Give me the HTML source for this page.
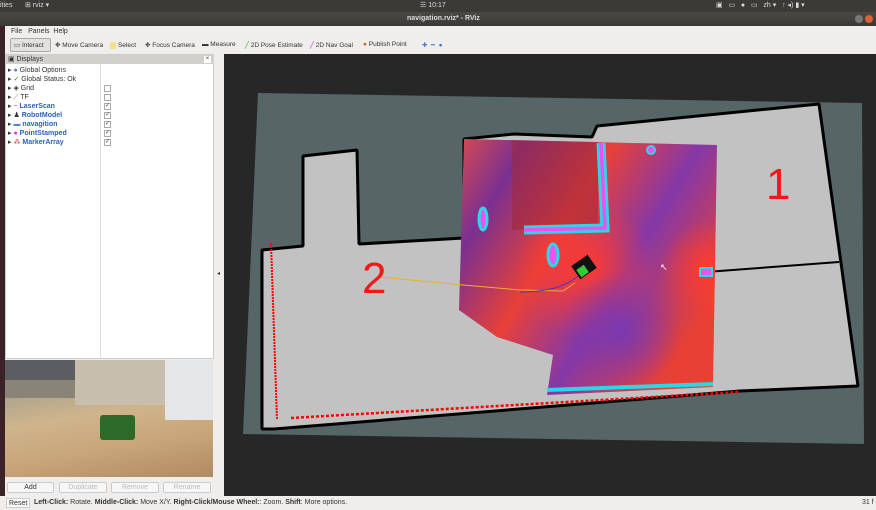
<!DOCTYPE html>
<html><head><meta charset="utf-8"><style>
*{margin:0;padding:0;box-sizing:border-box}
body{width:876px;height:510px;overflow:hidden;background:#efeeec;font-family:"Liberation Sans",sans-serif;font-size:7px;color:#333;position:relative}
.abs{position:absolute}
.row{position:absolute;left:8px;height:9px;line-height:9px;white-space:nowrap}
.row b{color:#2a62b8}
.cb{position:absolute;left:104px;width:7px;height:7px;border:1px solid #aaa;background:#fff;font-size:6px;line-height:5px;text-align:center;color:#345}
.btn{position:absolute;top:482px;height:11px;border:1px solid #ccc;border-radius:2px;background:#f7f7f7;text-align:center;line-height:10px;font-size:7px}
.tb{position:absolute;top:41px;white-space:nowrap;font-size:6.5px}
</style></head><body>
<div class="abs" style="left:0;top:0;width:876px;height:12px;background:#3b3a36;color:#ddd;font-size:7px;line-height:12px">
<span class="abs" style="left:0">ities</span><span class="abs" style="left:25px">⊞ rviz ▾</span>
<span class="abs" style="left:420px">☰ 10:17</span>
<span class="abs" style="left:716px">▣ &nbsp; ▭ &nbsp; ● &nbsp; ▭ &nbsp; zh ▾ &nbsp; ↑ ◂) ▮ ▾</span></div>
<div class="abs" style="left:0;top:12px;width:876px;height:14px;background:linear-gradient(#4a4944,#3a3935);color:#ddd;line-height:14px;font-weight:bold;font-size:7px"><span class="abs" style="left:407px">navigation.rviz* - RViz</span>
<span class="abs" style="left:855px;top:3px;width:8px;height:8px;border-radius:4px;background:#777"></span><span class="abs" style="left:865px;top:3px;width:8px;height:8px;border-radius:4px;background:#e06030"></span></div>
<div class="abs" style="left:5px;top:26px;width:871px;height:11px;line-height:11px"><span style="margin-left:6px">File &nbsp; Panels &nbsp;Help</span></div>
<div class="abs" style="left:0;top:26px;width:5px;height:484px;background:#3a2228"></div>
<div class="abs" style="left:10px;top:38px;width:41px;height:14px;border:1px solid #aaa;border-radius:2px;background:#e2e1df"></div>
<span class="tb" style="left:14px">▭ Interact</span>
<span class="tb" style="left:55px">✥ Move Camera</span>
<span class="tb" style="left:110px"><span style="background:#f2e38a;color:#f2e38a">▭</span> Select</span>
<span class="tb" style="left:145px">✥ Focus Camera</span>
<span class="tb" style="left:202px">▬ Measure</span>
<span class="tb" style="left:245px"><span style="color:#2a2">╱</span> 2D Pose Estimate</span>
<span class="tb" style="left:310px"><span style="color:#c2c">╱</span> 2D Nav Goal</span>
<span class="tb" style="left:363px"><span style="color:#c60">●</span> Publish Point</span>
<span class="tb" style="left:422px;color:#47c">✚ &nbsp;━ &nbsp;●</span>
<div class="abs" style="left:5px;top:54px;width:209px;height:305px;background:#fff;border:1px solid #ccc"></div>
<div class="abs" style="left:5px;top:55px;width:209px;height:9px;background:#d2d0cc;line-height:9px;padding-left:3px">▣ Displays<span class="abs" style="right:3px;top:1px;width:7px;height:7px;background:#fff;font-size:6px;line-height:7px;text-align:center">×</span></div>
<div class="abs" style="left:100px;top:64px;width:1px;height:295px;background:#ddd"></div>
<div class="row" style="top:66px">▸ <span style="color:#48c">●</span> Global Options</div>
<div class="row" style="top:75px">▸ <span style="color:#292">✓</span> Global Status: Ok</div>
<div class="row" style="top:84px">▸ ◈ Grid</div><div class="cb" style="top:85px"></div>
<div class="row" style="top:93px">▸ <span style="color:#c60">⟋</span> TF</div><div class="cb" style="top:94px"></div>
<div class="row" style="top:102px">▸ <span style="color:#d33">~</span> <b>LaserScan</b></div><div class="cb" style="top:103px">✓</div>
<div class="row" style="top:111px">▸ ♟ <b>RobotModel</b></div><div class="cb" style="top:112px">✓</div>
<div class="row" style="top:120px">▸ <span style="color:#58c">▬</span> <b>navagition</b></div><div class="cb" style="top:121px">✓</div>
<div class="row" style="top:129px">▸ <span style="color:#d3d">●</span> <b>PointStamped</b></div><div class="cb" style="top:130px">✓</div>
<div class="row" style="top:138px">▸ <span style="color:#c33">⁂</span> <b>MarkerArray</b></div><div class="cb" style="top:139px">✓</div>
<div class="abs" style="left:5px;top:360px;width:208px;height:117px;background:linear-gradient(170deg,#9a958c 0%,#b7a98d 30%,#cfb48c 45%,#c9a57a 70%,#b08a60 100%);overflow:hidden">
<div class="abs" style="left:0;top:0;width:70px;height:20px;background:#5c5d60"></div>
<div class="abs" style="left:0;top:20px;width:70px;height:18px;background:#8a8478"></div>
<div class="abs" style="left:70px;top:0;width:90px;height:45px;background:#c8beae"></div>
<div class="abs" style="left:160px;top:0;width:48px;height:60px;background:#e4e6e8"></div>
<div class="abs" style="left:95px;top:55px;width:35px;height:25px;background:#2d6a2a;border-radius:3px"></div>
</div>
<div class="btn" style="left:7px;width:47px">Add</div>
<div class="btn" style="left:59px;width:48px;color:#bbb">Duplicate</div>
<div class="btn" style="left:111px;width:48px;color:#bbb">Remove</div>
<div class="btn" style="left:163px;width:48px;color:#bbb">Rename</div>
<div class="abs" style="left:217px;top:270px;font-size:6px">◂</div>
<div class="abs" style="left:224px;top:54px;width:652px;height:442px;background:#272727">
<svg width="652" height="442" viewBox="224 54 652 442" style="position:absolute;left:0;top:0">
<defs>
<linearGradient id="lg" x1="0" y1="0" x2="1" y2="0.6"><stop offset="0" stop-color="#d84a50"/><stop offset="0.2" stop-color="#7a3090"/><stop offset="0.45" stop-color="#e84038"/><stop offset="0.7" stop-color="#8438a8"/><stop offset="1" stop-color="#e84034"/></linearGradient>
<radialGradient id="rb" cx="585" cy="268" r="70" gradientUnits="userSpaceOnUse"><stop offset="0" stop-color="#ff3a30"/><stop offset="1" stop-color="#ff3a30" stop-opacity="0"/></radialGradient>
<radialGradient id="rp" cx="620" cy="330" r="60" gradientUnits="userSpaceOnUse"><stop offset="0" stop-color="#7a38b0"/><stop offset="1" stop-color="#7a38b0" stop-opacity="0"/></radialGradient>
<radialGradient id="rr" cx="710" cy="270" r="50" gradientUnits="userSpaceOnUse"><stop offset="0" stop-color="#ff3c2c"/><stop offset="1" stop-color="#ff3c2c" stop-opacity="0"/></radialGradient>
</defs>
<polygon points="258,93 862,103 864,444 243,434" fill="#566565"/>
<polygon points="262,250 303,246 303,156 357,150 359,244 464,238 464,139 514,134 592,137 597,126 819,104 858,386 740,391 274,429 262,429" fill="#c2c2c2" stroke="#000" stroke-width="3" stroke-linejoin="bevel"/>
<line x1="706" y1="272" x2="839" y2="262" stroke="#000" stroke-width="2"/>
<polygon points="464,139 717,145 713,387 547,395 553,355 497,337 459,310" fill="url(#lg)"/>
<polygon points="464,139 717,145 713,387 547,395 553,355 497,337 459,310" fill="url(#rb)"/>
<polygon points="464,139 717,145 713,387 547,395 553,355 497,337 459,310" fill="url(#rp)"/>
<polygon points="464,139 717,145 713,387 547,395 553,355 497,337 459,310" fill="url(#rr)"/>
<polygon points="512,140 598,142 598,228 512,230" fill="#a02838" opacity="0.55"/>
<polyline points="601,143 605,228 524,230" fill="none" stroke="#28d8e8" stroke-width="9"/>
<polyline points="601,143 605,228 524,230" fill="none" stroke="#f050f0" stroke-width="3.5"/>
<ellipse cx="483" cy="219" rx="4" ry="11" fill="#f050f0" stroke="#28d8e8" stroke-width="3"/>
<ellipse cx="553" cy="255" rx="5" ry="11" fill="#f050f0" stroke="#28d8e8" stroke-width="3"/>
<circle cx="651" cy="150" r="4" fill="#f050f0" stroke="#28d8e8" stroke-width="2"/>
<rect x="700" y="268" width="12" height="8" fill="#f050f0" stroke="#28d8e8" stroke-width="2"/>
<polyline points="547,390 713,384" stroke="#28d8e8" stroke-width="4"/>
<polyline points="380,277 463,285 520,290 563,291 575,283" fill="none" stroke="#e8b030" stroke-width="1"/>
<path d="M520,292 Q560,292 578,276" fill="none" stroke="#5030c0" stroke-width="1"/>
<g transform="translate(584,267) rotate(-35)"><rect x="-10" y="-8" width="20" height="16" fill="#111"/><rect x="-8" y="-2" width="9" height="9" fill="#3c3"/></g>
<polyline points="271,243 277,420" stroke="#f00" stroke-width="2" stroke-dasharray="2,1"/>
<polyline points="291,418 739,392" stroke="#f00" stroke-width="2.5" stroke-dasharray="3,2"/>
<text x="766" y="199" font-family="Liberation Sans" font-size="44" fill="#f01818">1</text>
<text x="362" y="293" font-family="Liberation Sans" font-size="44" fill="#f01818">2</text>
<text x="660" y="270" font-size="9" fill="#fff">↖</text>
</svg></div>
<div class="abs" style="left:0;top:496px;width:876px;height:14px;background:#efeeec;line-height:14px;font-size:7px;white-space:nowrap">
<span class="abs" style="left:6px;top:2px;height:10px;line-height:9px;border:1px solid #ccc;padding:0 2px;background:#fafafa">Reset</span>
<span class="abs" style="left:34px"><b>Left-Click:</b> Rotate. <b>Middle-Click:</b> Move X/Y. <b>Right-Click/Mouse Wheel:</b>: Zoom. <b>Shift</b>: More options.</span>
<span class="abs" style="left:862px">31 f</span></div>
</body></html>
